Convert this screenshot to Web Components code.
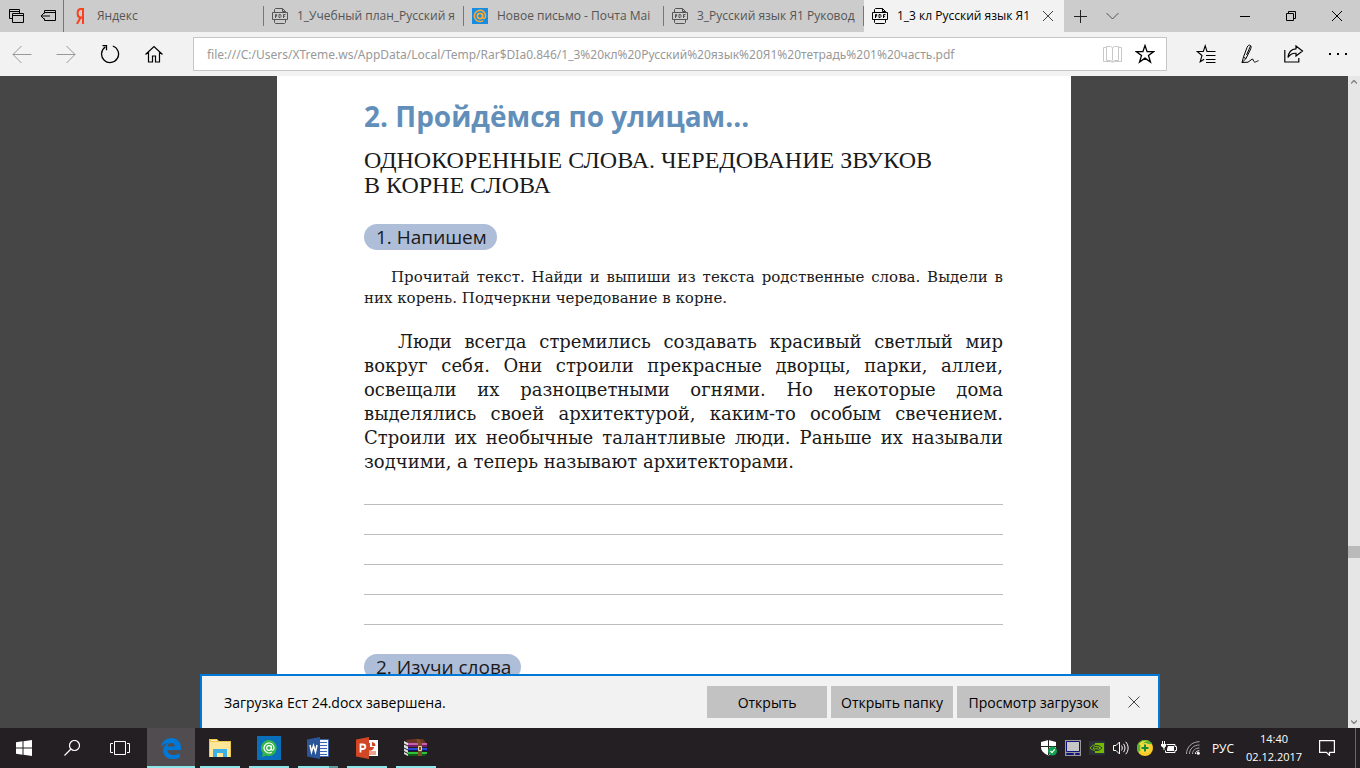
<!DOCTYPE html>
<html lang="ru">
<head>
<meta charset="utf-8">
<title>1_3 кл Русский язык Я1</title>
<style>
  html, body { margin: 0; height: 100%; }
  body { font-family: "Open Sans", "Noto Sans", sans-serif; font-size: 12px; color: #000; overflow: hidden; }
</style>
</head>
<body>
<browser-window>
  <tab-strip slot="tabs">
    <browser-tab icon="yandex">Яндекс</browser-tab>
    <browser-tab icon="pdf">1_Учебный план_Русский я</browser-tab>
    <browser-tab icon="mail">Новое письмо - Почта Mai</browser-tab>
    <browser-tab icon="pdf">3_Русский язык Я1 Руковод</browser-tab>
    <browser-tab icon="pdf" active>1_3 кл Русский язык Я1</browser-tab>
  </tab-strip>
  <nav-bar slot="nav" url="file:///C:/Users/XTreme.ws/AppData/Local/Temp/Rar$DIa0.846/1_3%20кл%20Русский%20язык%20Я1%20тетрадь%201%20часть.pdf"></nav-bar>
  <pdf-viewer slot="content">
    <pdf-page>
      <section-title>2. Пройдёмся по улицам...</section-title>
      <section-topic>ОДНОКОРЕННЫЕ СЛОВА. ЧЕРЕДОВАНИЕ ЗВУКОВ<br>В КОРНЕ СЛОВА</section-topic>
      <task-label>1. Напишем</task-label>
      <text-block kind="task">
        <text-line first>Прочитай текст. Найди и выпиши из текста родственные слова. Выдели в</text-line>
        <text-line last>них корень. Подчеркни чередование в корне.</text-line>
      </text-block>
      <text-block kind="story">
        <text-line first>Люди всегда стремились создавать красивый светлый мир</text-line>
        <text-line>вокруг себя. Они строили прекрасные дворцы, парки, аллеи,</text-line>
        <text-line>освещали их разноцветными огнями. Но некоторые дома</text-line>
        <text-line>выделялись своей архитектурой, каким-то особым свечением.</text-line>
        <text-line>Строили их необычные талантливые люди. Раньше их называли</text-line>
        <text-line last>зодчими, а теперь называют архитекторами.</text-line>
      </text-block>
      <writing-lines rows="5"></writing-lines>
      <task-label>2. Изучи слова</task-label>
    </pdf-page>
    <download-bar slot="overlay">Загрузка Ест 24.docx завершена.</download-bar>
  </pdf-viewer>
  <task-bar slot="taskbar"></task-bar>
</browser-window>

<script>
const ICONS = {
  tabsAside: [15, 15, `<g fill="none" stroke="#000"><path d="M3.500 9.500H.500V.500h10v4M.500 2.500h10M3.500 4.500h11v9h-11zM3.500 6.500h11"/></g>`],
  setAside: [16, 16, `<g fill="none" stroke="#000"><path d="M4.500 5.500v-3h11v10h-11v-2M4.500 4.500h11M1 8h9M4 5 1 8l3 3"/></g>`],
  yandex: [16, 16, `<path fill="none" stroke="#fc3f1d" stroke-width="2" d="M11 16V1H9C4.500 1 4.500 9.500 9 9.500h2M8.500 9.500 5 16"/>`],
  pdf: [16, 16, `<g fill="none" stroke="currentColor"><path d="M2.500 4.500v-3l1-1h7l3 3v1M10.500.500v3h3M2.500 11.500v3l1 1h9l1-1v-3M.500 4.500h15v7H.500z"/><path d="M3.500 10V6.500h1.200v1.700H3.500M7 6.500v3h1.200l.800-.800V7.200l-.800-.700zM11.500 10V6.500h2M11.500 8.300h1.600"/></g>`],
  mail: [16, 16, `<rect width="16" height="16" fill="#168de2"/><circle cx="8" cy="8" r="2.600" fill="none" stroke="#ffa930" stroke-width="1.700"/><path d="M10.600 5.400v3.800c0 2 3 1.800 3-1.200a5.600 5.600 0 1 0-2.300 4.500" fill="none" stroke="#ffa930" stroke-width="1.500"/>`],
  close: [10, 10, `<path d="M0 0l10 10M10 0 0 10" stroke="currentColor" fill="none"/>`],
  dismiss: [12, 12, `<path d="M.500.500l11 11M11.500.500l-11 11" stroke="currentColor" fill="none"/>`],
  plus: [13, 13, `<path d="M6.500 0v13M0 6.500h13" stroke="#222" fill="none"/>`],
  chevron: [13, 8, `<path d="m.500 1 6 6 6-6" stroke="#555" fill="none"/>`],
  minimize: [10, 10, `<path d="M0 5.500h10" stroke="#000"/>`],
  restore: [10, 10, `<path d="M.500 2.500h7v7h-7zM2.500 2.500v-2h7v7h-2" stroke="#000" fill="none"/>`],
  back: [20, 18, `<path d="M19.500 9.500H1M9.500 1 1 9.500 9.500 18" stroke="#999" fill="none"/>`],
  forward: [20, 18, `<path d="M.500 9.500H19M10.500 1 19 9.500 10.500 18" stroke="#999" fill="none"/>`],
  reload: [20, 20, `<path d="M5.300 3A8.500 8.500 0 1 0 12.800 2M2.500 1.700h4v4.500" stroke="#000" stroke-width="1.300" fill="none"/>`],
  home: [18, 18, `<path d="M.500 9.500 9 1.500l8.500 8M3.500 7.500v9.500h4v-6h3v6h4V7.500" stroke="#000" stroke-width="1.200" fill="none"/>`],
  book: [20, 18, `<g fill="none" stroke="#c8c8c8"><path d="M9.500 2.500v13M3.500 1.500h4l2 1 2-1h4v14h-4l-2 1-2-1h-4z"/><path d="M3 2.500H.500v14h7l2 1 2-1h7v-14h-2.500"/></g>`],
  star: [20, 20, `<path d="m10 1.500 2.100 6.100h6.600l-5.200 4 2 6.500-5.500-4-5.500 4 2-6.500-5.200-4h6.600z" stroke="#000" stroke-width="1.300" fill="none"/>`],
  hub: [20, 20, `<path d="M12.500 7.500 11 7.500 9.200 1.800 7.300 7.500H1.200l4.800 4-1.800 6.300 4-2.600M11 7.500h8.500M10 11.500h9.500M10 15.500h9.500M10 18.500h9.500" stroke="#000" stroke-width="1.100" fill="none"/>`],
  pen: [18, 20, `<path d="M1 18.500 2.500 13 6 3.500C7 1 8.300.800 9.500 1.500c1.200 1 .500 2.500-.300 4.500L5 14.500l-4 4 6-.300 4-3c1.500-1 1 2.500 2.500 2.800 1.500.200 2.500-1 4-1.300M3 13.500l2 1M9.500 2 5.500 11" stroke="#000" stroke-width="1" fill="none"/>`],
  share: [20, 18, `<path d="M.800 5v12h14v-4M12 1l6.500 5-6.500 5V8.300C8 8 6 9.500 4 12.500 4.500 7.500 7.500 4 12 3.800z" stroke="#000" stroke-width="1.200" fill="none"/>`],
  more: [18, 4, `<path d="M0 1h2v2H0zM8 1h2v2H8zM16 1h2v2h-2z"/>`],
  up: [6, 4, `<path d="m0 3.500 3-3 3 3" stroke="#888" stroke-width="1.500" fill="none"/>`],
  down: [6, 4, `<path d="m0 .500 3 3 3-3" stroke="#888" stroke-width="1.500" fill="none"/>`],
  windows: [16, 16, `<path fill="#fff" d="m0 2.200 6.500-.900v6.200H0zM7.500 1.200 16 0v7.500H7.500zM0 8.500h6.500v6.200L0 13.800zM7.500 8.500H16V16l-8.500-1.200z"/>`],
  search: [16, 16, `<g fill="none" stroke="#fff" stroke-width="1.200"><circle cx="10.500" cy="5.500" r="5"/><path d="M7 9 .500 15.500"/></g>`],
  taskView: [20, 14, `<path d="M4.500.500h11v13h-11zM3 2.500H.500v9H3M17 2.500h2.500v9H17" fill="none" stroke="#fff"/>`],
  edge: [20, 21, `<path fill="#0078d7" d="M0 9.300C.800 3.500 5 0 10.300 0 16 0 20 4 20 9.700V12H6.300c.100 3.400 3 5 6.400 5 2.200 0 4.200-.600 6-1.700V19.500c-2 1-4.300 1.500-7 1.500C6 21 2.200 17.800 2.200 12.700c0-3.500 1.800-6.200 5.100-7.800C4.500 5.200 1.500 6.800 0 9.300zM6.500 8.500h7.300c0-2.300-1.200-3.600-3.400-3.600-2.100 0-3.600 1.400-3.900 3.600z"/>`],
  folder: [22, 18, `<path fill="#eec54d" d="M0 0h8l2 2h12v16H0z"/><path fill="#ffe79a" d="M1 3h20v15H1z"/><path fill="#fff5cc" d="M2 1h6v1H2z"/><path fill="#3db1e6" d="M4 10h14v8h-4v-4H8v4H4z"/>`],
  agent: [24, 24, `<rect width="24" height="24" fill="#0a6fba"/><path fill="#35b44a" d="M12 4a8 8 0 1 1-3 15.500L5 21l.800-4A8 8 0 0 1 12 4z"/><circle cx="12" cy="12" r="2.300" stroke="#fff" fill="none" stroke-width="1.200"/><path d="M14.400 9.500V13c0 2 2.600 1.500 2.600-1a5 5 0 1 0-2.300 4.200" stroke="#fff" fill="none" stroke-width="1.200"/>`],
  word: [22, 22, `<path fill="#f5f8fd" stroke="#3c67b0" d="M11.500 2.500h10v17h-10z"/><path d="M13 5.500h7M13 8.500h7M13 11.500h7M13 14.500h7M13 17.500h7" stroke="#3c67b0"/><path fill="#2a5699" d="M0 2.500 13 0v22L0 19.500z"/><path d="m3 8 1.500 7L6.500 8.500 8.500 15 10 8" stroke="#fff" stroke-width="1.500" fill="none"/>`],
  powerpoint: [22, 22, `<path fill="#fff" d="M11 3h11v16H11z"/><path fill="#d24625" d="M14 6v4h4a4 4 0 0 1-5 3.500V6zM16 5a4 4 0 0 1 3.500 4H16zM13 14.500h7v1h-7zM13 16.500h7v1h-7z"/><path fill="#d24625" d="M0 2.500 13 0v22L0 19.500z"/><path d="M4.500 15.500V7.500h2.200c3.500 0 3.500 4.500 0 4.500H4.500" stroke="#fff" stroke-width="1.800" fill="none"/>`],
  winrar: [24, 18, `<path fill="#6b3524" d="M2 1 10 0h9l4 5H4z"/><path fill="#c55fb4" d="M4 4h19v3H4z"/><path fill="#7a1c63" d="M4 6h19v2H4z"/><path fill="#2b49d8" d="M4 9h19v2H4z"/><path fill="#0c1562" d="M4 11h19v1H4z"/><path fill="#2fc33c" d="M4 13h19v2H4z"/><path fill="#0f5a18" d="M4 15h18l-1 2H4z"/><path fill="#ddd" d="m0 2 4 2v13l-4-2z"/><path d="m0 5 4 2M0 9l4 2M0 12.500l4 2" stroke="#222"/><path fill="#7c4c24" d="M12 0h3l3 4v13h-4V5z"/><path fill="none" stroke="#e8d49c" d="M14.500 7.500h3v4h-3z"/>`],
  shield: [16, 16, `<path fill="#fff" d="M7.500 0 15 2v5c0 4-3 6.500-7.500 8.500C3 13.500 0 11 0 7V2z"/><path d="M7.500 0v15M0 6.500h15" stroke="#231f22" stroke-width="1"/><circle cx="11.500" cy="11" r="4.500" fill="#12a150"/><path d="m9.500 11 1.500 1.600 2.700-3.200" stroke="#fff" fill="none" stroke-width="1.200"/>`],
  monitor: [16, 16, `<path fill="#999" d="M0 0h16v16H0z"/><path fill="#c6c6c6" stroke="#12127c" d="M1.500 1.500h13v10h-13z"/><path fill="#ddd" stroke="#12127c" d="M1.500 13.500h7v1h-7zM10.500 13.500h4v1h-4z"/>`],
  nvidia: [16, 14, `<path fill="#293238" d="M0 0h16v14H0z"/><path fill="#76b900" d="M6 2h9v10H6z"/><path d="M1 7c3-4 7-4 10 0-3 3-7 3-10 0zM4 7c1.500-2 4-2 5 0-1.500 1.500-4 1.500-5 0z" stroke="#76b900" fill="none"/><path d="M6 4.500c3-.500 5 .500 7 2.500-2 2-4 3-7 2.500M6 6.500c2-.300 3 0 4 .800-1 .900-2 1.200-4 .900" stroke="#293238" fill="none"/>`],
  speaker: [16, 14, `<g fill="none" stroke="#fff"><path d="M.500 4.500h2.500L6.500 1v12L3 9.500H.500zM8.500 4.500c1 1.500 1 3.500 0 5M10.500 2.800c2 2.500 2 6 0 8.400M12.700.800c3.200 3.500 3.200 9 0 12.400"/></g>`],
  plusBall: [16, 16, `<circle cx="8" cy="8" r="8" fill="#f9cc28"/><path fill="#54b631" d="M8 0a8 8 0 0 0-7 12C4 11 5 9 5.500 6 7 4 11 4 15 4A8 8 0 0 0 8 0z"/><path fill="#f4df3f" d="M2 4c2-3 6-4 9-3-2 0-5 1-7 5z"/><circle cx="8" cy="8" r="5" fill="#f8d744"/><path d="M8 4.500v7M4.500 8h7" stroke="#168a36" stroke-width="2"/>`],
  battery: [16, 14, `<path d="M5.500 3.500h8.500v2h1.500v4H14v2H4.500v-2" fill="none" stroke="#fff"/><path fill="#fff" d="M7 5h6v5H6V8zM0 3h5v2L3.500 7v2h-1V7L0 5zM1 0h1v3H1zM3 0h1v3H3z"/>`],
  wifi: [14, 14, `<g fill="none" stroke="#aaa"><path d="M.500 13C.500 6 6 .700 13.500.700M3.500 13c0-5 4-9 10-9M6.500 13c0-3.500 3-6 7-6"/></g><path d="M9.300 13c0-2 1.700-3.300 4-3.300" fill="none" stroke="#fff"/><circle cx="12.300" cy="12.300" r="1.500" fill="#fff"/>`],
  notice: [16, 16, `<path d="M.600.600h14.800v11.800H10.500V15.400L7.500 12.400H.600z" fill="none" stroke="#fff" stroke-width="1.200"/>`]
};

class Part extends HTMLElement {
  connectedCallback() {
    if (this.shadowRoot) return;
    const template = document.createElement('template');
    template.innerHTML = `<style>*{box-sizing:border-box}:host{box-sizing:border-box;display:block}</style>` + this.render();
    this.attachShadow({ mode: 'open' }).append(template.content.cloneNode(true));
  }
}
const define = (name, render) => customElements.define(name, class extends Part {
  render() { return render(this); }
});

define('ui-icon', el => {
  const [w, h, body] = ICONS[el.getAttribute('name')];
  return `<style>:host{flex:none;line-height:0}svg{display:block}</style>
    <svg width="${w}" height="${h}" viewBox="0 0 ${w} ${h}" aria-hidden="true">${body}</svg>`;
});

define('icon-button', el => `
  <style>
    :host{width:var(--w,44px);flex:none;align-self:stretch}
    button{width:100%;height:100%;border:0;padding:0;background:none;color:inherit;display:flex;align-items:center;justify-content:center}
  </style>
  <button type="button" aria-label="${el.getAttribute('label')}"><ui-icon name="${el.getAttribute('icon')}"></ui-icon></button>`);

define('browser-window', () => `
  <style>:host{display:grid;grid-template-rows:auto auto minmax(0,1fr) auto;height:100vh}</style>
  <slot name="tabs"></slot><slot name="nav"></slot><slot name="content"></slot><slot name="taskbar"></slot>`);

define('tab-strip', () => `
  <style>
    :host{display:flex;height:32px;background:#ccc}
    .aside{display:flex;width:64px;flex:none;border-right:1px solid #777}
    .tabs{display:flex;flex:0 1 1000px;min-width:0}
    .window{display:flex;margin-left:auto}
    .aside icon-button{--w:32px} .add{--w:32px} .window icon-button{--w:46px}
  </style>
  <div class="aside"><icon-button icon="tabsAside" label="Отложенные вкладки"></icon-button><icon-button icon="setAside" label="Отложить вкладки"></icon-button></div>
  <div class="tabs"><slot></slot></div>
  <icon-button class="add" icon="plus" label="Новая вкладка"></icon-button>
  <icon-button class="add" icon="chevron" label="Эскизы вкладок"></icon-button>
  <div class="window"><icon-button icon="minimize" label="Свернуть"></icon-button><icon-button icon="restore" label="Восстановить"></icon-button><icon-button icon="close" label="Закрыть"></icon-button></div>`);

define('browser-tab', el => `
  <style>
    :host{flex:0 1 200px;min-width:0;display:flex;color:#555;background:linear-gradient(#777,#777) right 6px / 1px 20px no-repeat}
    :host([active]){background:#f2f2f2;color:#000}
    .tab{flex:1;min-width:0;display:flex;align-items:center;gap:9px;padding:0 8px;border:0;background:none;color:inherit;font:inherit;text-align:left}
    .text{flex:1;min-width:0;overflow:hidden;white-space:nowrap;line-height:20px}
    :host([active]) .tab{padding-right:0}
    icon-button{--w:32px;color:#444}
  </style>
  <button class="tab" type="button"><ui-icon name="${el.getAttribute('icon')}"></ui-icon><span class="text"><slot></slot></span></button>
  ${el.hasAttribute('active') ? '<icon-button icon="close" label="Закрыть вкладку"></icon-button>' : ''}`);

define('nav-bar', el => `
  <style>
    :host{display:flex;align-items:center;height:44px;background:#f2f2f2}
    .group{display:flex;align-self:stretch}
    form{flex:1;min-width:0;display:flex;height:34px;margin:0 17px;border:1px solid #c6c6c6;background:#fff;padding-right:5px}
    input{flex:1;min-width:0;border:0;padding:0 13px;background:none;color:#999;font:12px "Noto Sans",sans-serif;outline:0}
    form icon-button{--w:32px}
  </style>
  <div class="group"><icon-button icon="back" label="Назад"></icon-button><icon-button icon="forward" label="Вперед"></icon-button><icon-button icon="reload" label="Обновить"></icon-button><icon-button icon="home" label="Домой"></icon-button></div>
  <form><input aria-label="Адрес" value="${el.getAttribute('url')}"><icon-button icon="book" label="Режим чтения"></icon-button><icon-button icon="star" label="В избранное"></icon-button></form>
  <div class="group"><icon-button icon="hub" label="Концентратор"></icon-button><icon-button icon="pen" label="Заметка"></icon-button><icon-button icon="share" label="Поделиться"></icon-button><icon-button icon="more" label="Дополнительно"></icon-button></div>`);

define('pdf-viewer', () => `
  <style>
    :host{position:relative;display:flex;min-height:0;background:#464646}
    .canvas{flex:1;min-width:0;overflow:hidden;display:flex;justify-content:center}
    .scroll{width:12px;background:#e6e6e6;display:grid;grid-template-rows:12px 458fr 12px 158fr 12px;justify-items:center;align-items:center}
    .thumb{grid-row:3;width:100%;height:100%;background:#bababa}
    .down{grid-row:5}
    .overlay{position:absolute;left:0;right:0;bottom:0;display:flex;justify-content:center}
  </style>
  <div class="canvas"><slot></slot></div>
  <div class="scroll"><ui-icon name="up"></ui-icon><div class="thumb"></div><ui-icon class="down" name="down"></ui-icon></div>
  <div class="overlay"><slot name="overlay"></slot></div>`);

define('pdf-page', () => `
  <style>:host{width:794px;flex:0 1 auto;background:#fff;padding:20px 68px 0 87px;color:#1a1a1a;font-family:"Liberation Serif",serif}</style>
  <slot></slot>`);

define('section-title', () => `
  <style>h1{margin:0;font:bold 28px/40px "Open Sans",sans-serif;color:#628fba;white-space:nowrap}</style>
  <h1><slot></slot></h1>`);

define('section-topic', () => `
  <style>h2{margin:12px 0 26px;font-weight:400;font-size:24px;line-height:25px;white-space:nowrap}</style>
  <h2><slot></slot></h2>`);

define('task-label', () => `
  <style>h3{display:table;margin:0;padding:0 10px 0 12px;border-radius:13px;background:#aebdd8;font:400 19px/26px "Open Sans",sans-serif}</style>
  <h3><slot></slot></h3>`);

define('text-block', () => `
  <style>
    :host{font-family:"DejaVu Serif",serif}
    :host([kind=task]){margin-top:17px;font-size:15px;line-height:21px;--indent:27px}
    :host([kind=story]){margin-top:21px;font-size:18px;line-height:24px;--indent:34px}
  </style><slot></slot>`);

define('text-line', () => `
  <style>
    :host{white-space:nowrap;text-align:justify;text-align-last:justify}
    :host([first]){text-indent:var(--indent)}
    :host([last]){text-align-last:left}
  </style><slot></slot>`);

define('writing-lines', el => `
  <style>
    :host{margin:1px 0 29px}
    div{height:30px;border-bottom:1px solid #bdbdbd}
  </style>${'<div></div>'.repeat(+el.getAttribute('rows'))}`);

define('download-bar', () => `
  <style>
    :host{display:flex;align-items:center;gap:4px;width:960px;height:54px;padding:0 8px 0 22px;border:2px solid #0078d7;border-bottom:0;background:#f2f2f2;font-size:14px}
    p{flex:1;margin:0}
    button.action{height:32px;min-width:120px;padding:0 10px;border:0;background:#c2c2c2;font:inherit;color:#000;white-space:nowrap}
    button.wide{min-width:153px}
    icon-button{--w:32px;margin-left:4px;color:#444}
  </style>
  <p role="status"><slot></slot></p>
  <button class="action" type="button">Открыть</button>
  <button class="action" type="button">Открыть папку</button>
  <button class="action wide" type="button">Просмотр загрузок</button>
  <icon-button icon="dismiss" label="Закрыть"></icon-button>`);

define('task-bar', () => `
  <style>
    :host{display:flex;align-items:stretch;height:40px;background:#231f22;color:#fff;font-size:12px}
    .start{display:flex;margin-right:3px}
    .apps{display:flex;gap:1px}
    .start icon-button,.apps icon-button{--w:48px}
    .apps icon-button{background:linear-gradient(#8ee6ea,#8ee6ea) center bottom / 40px 2px no-repeat}
    .apps icon-button.current{background:linear-gradient(#8ee6ea,#8ee6ea) bottom / 100% 2px no-repeat #504c4f}
    .apps icon-button.stacked{background:linear-gradient(90deg,#8ee6ea 31px,#5f9a9d 31px) center bottom / 40px 2px no-repeat}
    .tray{display:flex;margin-left:auto}
    .tray icon-button{--w:24px}
    .lang,.clock{border:0;padding:0;background:none;color:inherit;font:inherit;text-align:center}
    .lang{width:36px}
    .clock{width:66px;font-size:11px;line-height:18px;white-space:nowrap}
    .tray icon-button.notice{--w:40px}
    .desktop{width:5px;margin-left:8px;padding:0;border:0;border-left:1px solid #6b686a;background:none}
  </style>
  <div class="start"><icon-button icon="windows" label="Пуск"></icon-button><icon-button icon="search" label="Поиск"></icon-button><icon-button icon="taskView" label="Представление задач"></icon-button></div>
  <div class="apps"><icon-button class="current" icon="edge" label="Microsoft Edge"></icon-button><icon-button icon="folder" label="Проводник"></icon-button><icon-button icon="agent" label="Агент"></icon-button><icon-button class="stacked" icon="word" label="Word"></icon-button><icon-button icon="powerpoint" label="PowerPoint"></icon-button><icon-button icon="winrar" label="WinRAR"></icon-button></div>
  <div class="tray"><icon-button icon="shield" label="Защитник"></icon-button><icon-button icon="monitor" label="Экран"></icon-button><icon-button icon="nvidia" label="NVIDIA"></icon-button><icon-button icon="speaker" label="Громкость"></icon-button><icon-button icon="plusBall" label="Антивирус"></icon-button><icon-button icon="battery" label="Батарея"></icon-button><icon-button icon="wifi" label="Сеть"></icon-button>
    <button class="lang" type="button">РУС</button>
    <button class="clock" type="button"><time>14:40<br>02.12.2017</time></button>
    <icon-button class="notice" icon="notice" label="Уведомления"></icon-button>
    <button class="desktop" type="button" aria-label="Показать рабочий стол"></button>
  </div>`);
</script>
</body>
</html>
